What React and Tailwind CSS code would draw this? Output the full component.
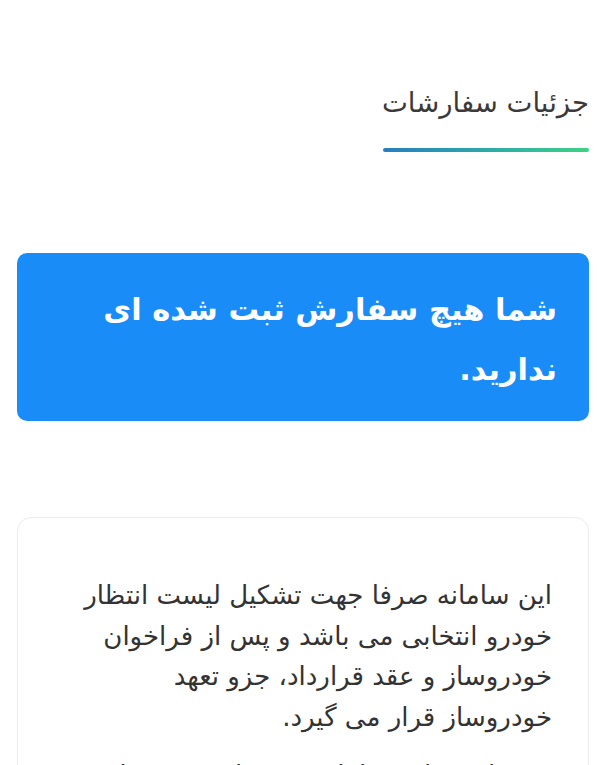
export default function App() {
  return (
    <div
      dir="rtl"
      className="min-h-screen bg-white px-[17px] pt-[80px] text-[#333]"
      style={{ fontFamily: '"DejaVu Sans", "Noto Sans", sans-serif' }}
    >
      {/* page title */}
      <div className="flex flex-col items-start">
        <h1 className="text-[27.5px] leading-[44px] font-normal text-[#3a3a3a]">جزئیات سفارشات</h1>
        <div className="mt-[24px] h-[4px] w-[206px] rounded-full bg-gradient-to-l from-[#3fd283] to-[#2a7dc0]" />
      </div>

      {/* empty state */}
      <div className="mt-[101px] rounded-[10px] bg-[#1a8cf7] px-[32px] pt-[27px] pb-[21px]">
        <p className="text-[30.5px] leading-[60px] font-bold text-white">
          شما هیچ سفارش ثبت شده ای
          <br />
          ندارید.
        </p>
      </div>

      {/* info card */}
      <div className="mt-[96px] rounded-[14px] border border-[#ececec] bg-white pr-[36px] pl-[30px] pt-[57px] pb-[40px]">
        <p className="text-[26px] leading-[40.5px] text-[#333]">
          این سامانه صرفا جهت تشکیل لیست انتظار
          <br />
          خودرو انتخابی می باشد و پس از فراخوان
          <br />
          خودروساز و عقد قرارداد، جزو تعهد
          <br />
          خودروساز قرار می گیرد.
        </p>
        <p className="mt-[18px] text-[26px] leading-[40.5px] text-[#333]">
          ثبت نام در این سامانه به منزله خرید قطعی خودرو نمی باشد.
        </p>
      </div>
    </div>
  );
}
